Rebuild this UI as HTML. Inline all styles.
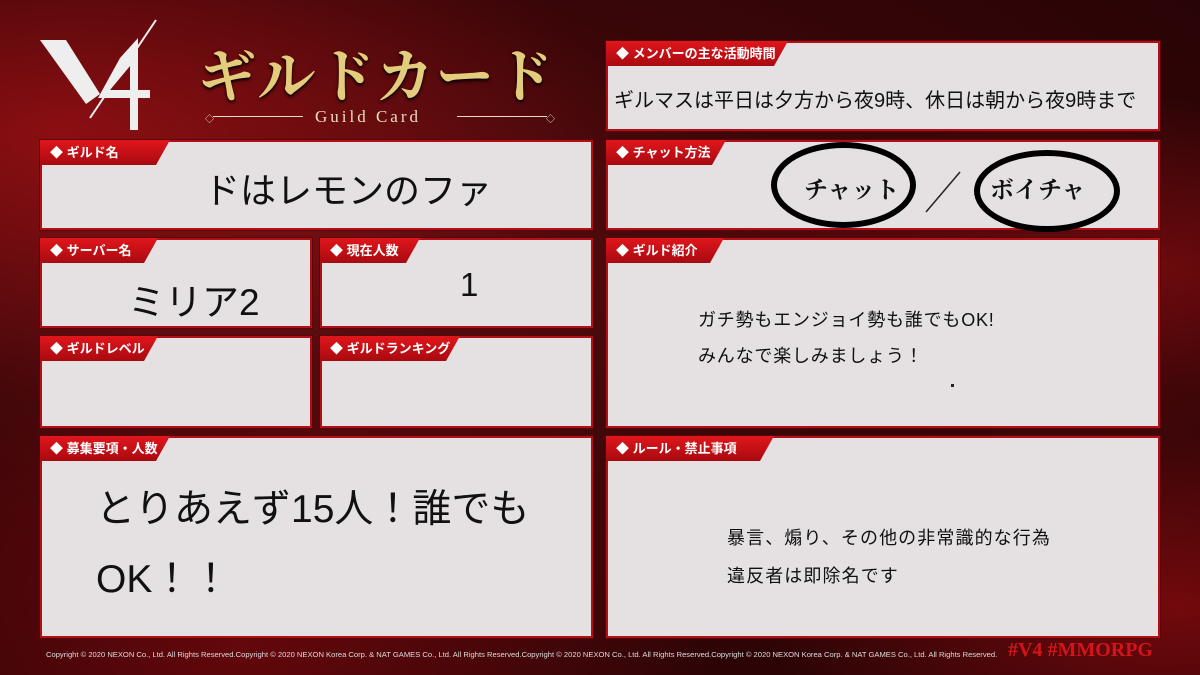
<!DOCTYPE html>
<html><head><meta charset="utf-8"><style>
*{margin:0;padding:0;box-sizing:border-box}
body{width:1200px;height:675px;overflow:hidden;position:relative;font-family:"Liberation Sans","Noto Sans CJK JP",sans-serif;
background:radial-gradient(ellipse at 30% 40%,#5a0d10 0%,#3a0608 45%,#220305 100%);}
.bg2{position:absolute;inset:0;background:radial-gradient(ellipse at 5% 20%,rgba(200,20,25,.55),transparent 35%),radial-gradient(ellipse at 95% 40%,rgba(170,15,20,.5),transparent 30%),radial-gradient(ellipse at 20% 95%,rgba(150,10,15,.5),transparent 35%),radial-gradient(ellipse at 98% 90%,rgba(190,15,20,.5),transparent 25%)}
.p{position:absolute;background:#e5e1e3;border:2px solid #b01016;box-shadow:0 0 0 1px #5a0508}
.t{position:absolute;left:-2px;top:-2px;height:25px;background:linear-gradient(#e0161c,#a80a10);color:#fff;font-weight:bold;font-size:13px;line-height:25px;padding-left:10px;clip-path:polygon(0 0,100% 0,calc(100% - 14px) 100%,0 100%)}
.c{position:absolute;color:#111;white-space:nowrap}
</style></head><body><div class="bg2"></div>
<svg style="position:absolute;left:38px;top:18px" width="130" height="120" viewBox="0 0 130 120">
<path d="M2 22 L28 22 L62 76 L48 86 Z" fill="#eee"/>
<path d="M118 2 L52 100" stroke="#eee" stroke-width="2"/>
<path d="M82 40 L100 20 L100 72 L112 72 L112 80 L100 80 L100 112 L92 112 L92 80 L60 80 Z M92 48 L72 72 L92 72 Z" fill="#eee"/>
</svg>
<div style="position:absolute;left:198px;top:30px;font-size:58px;font-family:'Noto Serif CJK SC','Liberation Serif',serif;font-weight:bold;color:#e3cc7c;letter-spacing:2px;text-shadow:0 2px 3px #000">ギルドカード</div>
<div style="position:absolute;left:205px;top:107px;width:350px;height:20px;color:#e8dcc0">
<div style="position:absolute;left:8px;top:9px;width:90px;height:1px;background:#e8dcc0"></div>
<div style="position:absolute;left:0;top:5px;font-size:9px">◇</div>
<div style="position:absolute;left:110px;top:0;font-family:'Liberation Serif',serif;font-size:17px;letter-spacing:3px">Guild Card</div>
<div style="position:absolute;left:252px;top:9px;width:90px;height:1px;background:#e8dcc0"></div>
<div style="position:absolute;left:341px;top:5px;font-size:9px">◇</div>
</div>

<div class="p" style="left:40px;top:140px;width:553px;height:90px"><div class="t" style="width:130px">◆ ギルド名</div><div class="c" style="left:162px;top:20px;font-size:36px">ドはレモンのファ</div></div>
<div class="p" style="left:40px;top:238px;width:272px;height:90px"><div class="t" style="width:118px">◆ サーバー名</div><div class="c" style="left:86px;top:32px;font-size:37px">ミリア2</div></div>
<div class="p" style="left:320px;top:238px;width:273px;height:90px"><div class="t" style="width:100px">◆ 現在人数</div><div class="c" style="left:138px;top:26px;font-size:33px">1</div></div>
<div class="p" style="left:40px;top:336px;width:272px;height:92px"><div class="t" style="width:118px">◆ ギルドレベル</div></div>
<div class="p" style="left:320px;top:336px;width:273px;height:92px"><div class="t" style="width:140px">◆ ギルドランキング</div></div>
<div class="p" style="left:40px;top:436px;width:553px;height:202px"><div class="t" style="width:130px">◆ 募集要項・人数</div><div class="c" style="left:54px;top:37px;font-size:39px;line-height:70px">とりあえず15人！誰でも<br>OK！！</div></div>

<div class="p" style="left:606px;top:41px;width:554px;height:90px"><div class="t" style="width:182px">◆ メンバーの主な活動時間</div><div class="c" style="left:6px;top:41px;font-size:20px">ギルマスは平日は夕方から夜9時、休日は朝から夜9時まで</div></div>
<div class="p" style="left:606px;top:140px;width:554px;height:90px"><div class="t" style="width:120px">◆ チャット方法</div>
<div style="position:absolute;left:163px;top:0px;width:145px;height:86px;border:6px solid #000;border-radius:50%"></div>
<div class="c" style="left:196px;top:28px;font-size:24px;font-weight:bold;font-family:'Noto Serif CJK SC',serif">チャット</div>
<svg style="position:absolute;left:316px;top:28px" width="40" height="44"><line x1="36" y1="2" x2="2" y2="42" stroke="#222" stroke-width="1.5"/></svg>
<div style="position:absolute;left:366px;top:8px;width:146px;height:82px;border:6px solid #000;border-radius:50%"></div>
<div class="c" style="left:382px;top:28px;font-size:24px;font-weight:bold;font-family:'Noto Serif CJK SC',serif">ボイチャ</div></div>
<div class="p" style="left:606px;top:238px;width:554px;height:190px"><div class="t" style="width:118px">◆ ギルド紹介</div><div class="c" style="left:90px;top:62px;font-size:18px;letter-spacing:0.8px;line-height:36px">ガチ勢もエンジョイ勢も誰でもOK!<br>みんなで楽しみましょう！</div><div style="position:absolute;left:343px;top:144px;width:3px;height:3px;background:#222"></div></div>
<div class="p" style="left:606px;top:436px;width:554px;height:202px"><div class="t" style="width:168px">◆ ルール・禁止事項</div><div class="c" style="left:119px;top:81px;font-size:18px;letter-spacing:1.1px;line-height:38px">暴言、煽り、その他の非常識的な行為<br>違反者は即除名です</div></div>

<div style="position:absolute;left:46px;top:650px;font-size:7.6px;color:#ddd;white-space:nowrap">Copyright © 2020 NEXON Co., Ltd. All Rights Reserved.Copyright © 2020 NEXON Korea Corp. &amp; NAT GAMES Co., Ltd. All Rights Reserved.Copyright © 2020 NEXON Co., Ltd. All Rights Reserved.Copyright © 2020 NEXON Korea Corp. &amp; NAT GAMES Co., Ltd. All Rights Reserved.</div>
<div style="position:absolute;left:1008px;top:639px;font-size:20px;color:#d4141a;font-family:'Liberation Serif',serif;font-weight:bold;white-space:nowrap">#V4 #MMORPG</div>
</body></html>
